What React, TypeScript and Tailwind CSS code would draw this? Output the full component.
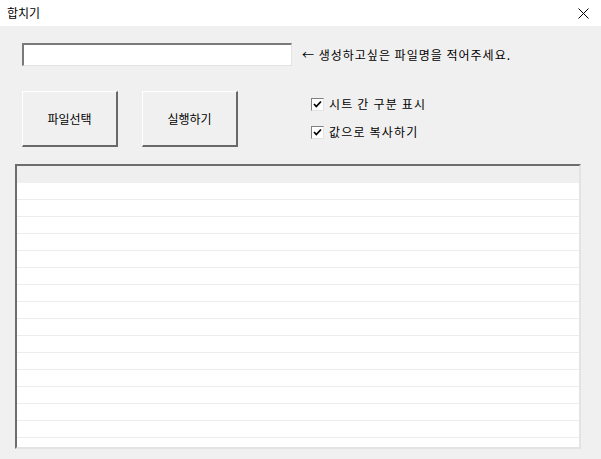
import React from 'react';

const font = { fontFamily: '"Noto Sans CJK KR", "Noto Sans", sans-serif' };

function Check({ label }: { label: string }) {
  return (
    <label className="flex items-center h-[14px] gap-[5px] text-[12px] text-black leading-none">
      <span className="w-[13px] h-[13px] border-t border-l border-[#808080] border-b border-r border-b-[#e3e3e3] border-r-[#e3e3e3] bg-white flex items-center justify-center">
        <svg width="9" height="9" viewBox="0 0 9 9">
          <path d="M1 4 L3.3 6.5 L8 1.5" stroke="#000" strokeWidth="1.8" fill="none" />
        </svg>
      </span>
      <span className="tracking-[1.2px]">{label}</span>
    </label>
  );
}

function RaisedButton({ children }: { children: React.ReactNode }) {
  return (
    <button className="w-[96px] h-[56px] border-t border-l border-white border-b-2 border-r-2 border-b-[#696969] border-r-[#696969] bg-[#f0f0f0] text-[12px] text-black">
      {children}
    </button>
  );
}

export default function App() {
  const rows = Array.from({ length: 16 });
  return (
    <div className="w-[601px] h-[459px] bg-[#f0f0f0] flex flex-col overflow-hidden" style={font}>
      {/* title bar */}
      <div className="h-[26px] bg-white flex items-center justify-between pl-[7px] pr-[12px]">
        <span className="text-[12px] text-black">합치기</span>
        <svg width="11" height="11" viewBox="0 0 11 11">
          <path d="M0.5 0.5 L10.5 10.5 M10.5 0.5 L0.5 10.5" stroke="#000" strokeWidth="1" />
        </svg>
      </div>

      {/* file name */}
      <div className="flex items-center pl-[22px] mt-[17px]">
        <div className="w-[270px] h-[23px] border-t-2 border-l-2 border-[#7a7a7a] border-b border-r border-b-[#e3e3e3] border-r-[#e3e3e3] bg-white" />
        <span className="ml-[10px] text-[12px] text-black tracking-[1px]">← 생성하고싶은 파일명을 적어주세요.</span>
      </div>

      {/* buttons + options */}
      <div className="flex items-start pl-[22px] mt-[25px]">
        <RaisedButton>파일선택</RaisedButton>
        <div className="ml-[24px]">
          <RaisedButton>실행하기</RaisedButton>
        </div>
        <div className="ml-[73px] mt-[6px] flex flex-col gap-[14px]">
          <Check label="시트 간 구분 표시" />
          <Check label="값으로 복사하기" />
        </div>
      </div>

      {/* list */}
      <div className="ml-[15px] mt-[17px] w-[566px] h-[285px] border-t-2 border-l-2 border-[#6d6d6d] border-b-2 border-r-2 border-b-[#e3e3e3] border-r-[#e3e3e3] bg-white overflow-hidden">
        <div className="h-[17px] bg-[#efefef]" />
        {rows.map((_, i) => (
          <div key={i} className="h-[17px] border-b border-[#ececec]" />
        ))}
      </div>
    </div>
  );
}
